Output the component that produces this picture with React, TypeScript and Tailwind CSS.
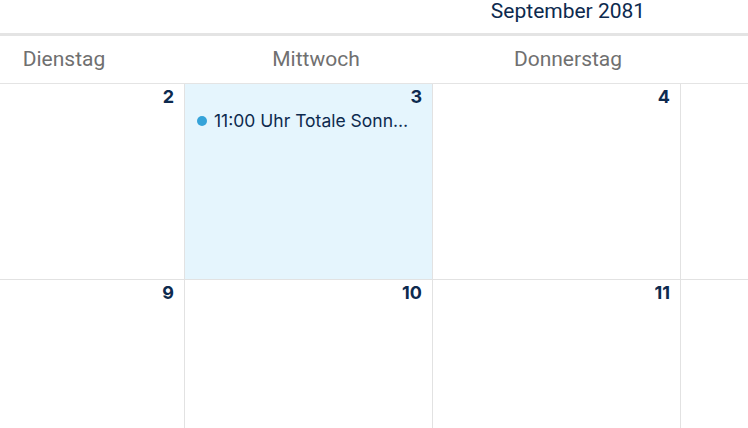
const COL = "grid grid-cols-[248px_248px_248px_248px]";
const HEAD = "grid grid-cols-[252px_252px_252px_252px]";

const weekdays = ["Dienstag", "Mittwoch", "Donnerstag", "Freitag"];

const rows = [
  [{ day: 2 }, { day: 3, today: true, events: ["11:00 Uhr Totale Sonnenfinsternis"] }, { day: 4 }, { day: 5 }],
  [{ day: 9 }, { day: 10 }, { day: 11 }, { day: 12 }],
];

type Cell = { day: number; today?: boolean; events?: string[] };

function DayCell({ cell }: { cell: Cell }) {
  return (
    <div
      className={`h-[196px] border-r border-b border-[#e2e2e2] pt-[1px] pr-[10px] ${
        cell.today ? "bg-[#e5f5fd]" : "bg-white"
      }`}
    >
      <div className="text-right text-[18px] font-bold leading-[24px] text-[#0d2a4e]">{cell.day}</div>
      {cell.events?.map((e) => (
        <div key={e} className="mt-[1px] flex items-center pl-[12px] pr-[10px]">
          <span className="block w-[10px] h-[10px] shrink-0 rounded-full bg-[#35a3d9]" />
          <span className="ml-[7px] truncate text-[17.5px] leading-[22px] text-[#0d2a4e]">{e}</span>
        </div>
      ))}
    </div>
  );
}

export default function App() {
  return (
    <div
      className="w-[748px] h-[428px] overflow-hidden bg-white"
      style={{ fontFamily: "Inter, 'Noto Sans', sans-serif" }}
    >
      <div className="ml-[-62px] w-[1010px]">
        <div className={`${HEAD} h-[33px]`}>
          <div />
          <div />
          <div className="text-center text-[21px] leading-[22px] text-[#0d2a4e] font-['Roboto',sans-serif]">
            September 2081
          </div>
        </div>
        <div className={`${HEAD} h-[51px] border-t-[3px] border-b border-[#e4e4e4] items-center`}>
          {weekdays.map((w) => (
            <div key={w} className="text-center text-[21px] text-[#707070] font-['Roboto',sans-serif]">
              {w}
            </div>
          ))}
        </div>
      </div>
      <div className="ml-[-63px] w-[1000px]">
        {rows.map((r, i) => (
          <div key={i} className={COL}>
            {r.map((c) => (
              <DayCell key={c.day} cell={c} />
            ))}
          </div>
        ))}
      </div>
    </div>
  );
}
